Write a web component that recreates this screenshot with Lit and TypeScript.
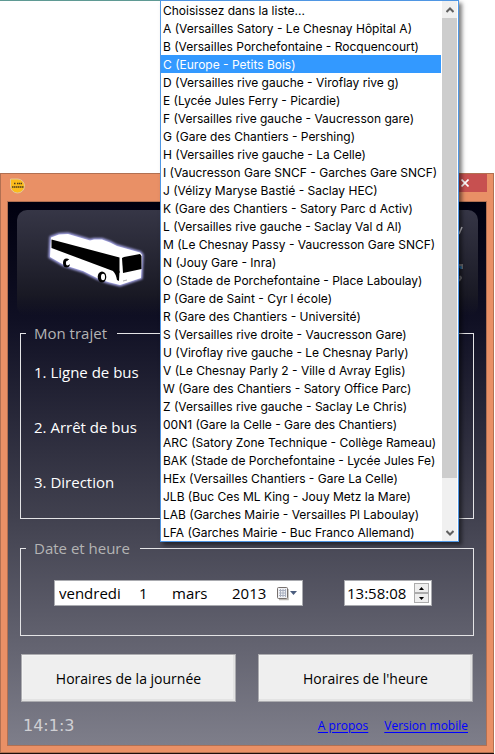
import { LitElement, html, css } from "lit";
import { customElement } from "lit/decorators.js";

const LINES = [
  "Choisissez dans la liste...",
  "A (Versailles Satory - Le Chesnay Hôpital A)",
  "B (Versailles Porchefontaine - Rocquencourt)",
  "C (Europe - Petits Bois)",
  "D (Versailles rive gauche - Viroflay rive g)",
  "E (Lycée Jules Ferry - Picardie)",
  "F (Versailles rive gauche - Vaucresson gare)",
  "G (Gare des Chantiers - Pershing)",
  "H (Versailles rive gauche - La Celle)",
  "I (Vaucresson Gare SNCF - Garches Gare SNCF)",
  "J (Vélizy Maryse Bastié - Saclay HEC)",
  "K (Gare des Chantiers - Satory Parc d Activ)",
  "L (Versailles rive gauche - Saclay Val d Al)",
  "M (Le Chesnay Passy - Vaucresson Gare SNCF)",
  "N (Jouy Gare - Inra)",
  "O (Stade de Porchefontaine - Place Laboulay)",
  "P (Gare de Saint - Cyr l école)",
  "R (Gare des Chantiers - Université)",
  "S (Versailles rive droite - Vaucresson Gare)",
  "U (Viroflay rive gauche - Le Chesnay Parly)",
  "V (Le Chesnay Parly 2 - Ville d Avray Eglis)",
  "W (Gare des Chantiers - Satory Office Parc)",
  "Z (Versailles rive gauche - Saclay Le Chris)",
  "00N1 (Gare la Celle - Gare des Chantiers)",
  "ARC (Satory Zone Technique - Collège Rameau)",
  "BAK (Stade de Porchefontaine - Lycée Jules Fe)",
  "HEx (Versailles Chantiers - Gare La Celle)",
  "JLB (Buc Ces ML King - Jouy Metz la Mare)",
  "LAB (Garches Mairie - Versailles Pl Laboulay)",
  "LFA (Garches Mairie - Buc Franco Allemand)",
];

@customElement("app-root")
export class AppRoot extends LitElement {
  static styles = css`
    :host {
      display: block;
      position: relative;
      box-sizing: border-box;
      min-height: 100vh;
      padding: 173px 1px 1px 0;
      background: linear-gradient(#5f9a94, #5f9a94) 0 0 / 160px 1px no-repeat #fff;
      font-family: "Trebuchet MS", "Open Sans", "Noto Sans", sans-serif;
      font-size: 15px;
      color: #fff;
      overflow: hidden;
    }
    * { box-sizing: border-box; }
    button, input, select { font: inherit; margin: 0; }
    .window {
      border: 1px solid #b17052;
      background: #e99066;
      padding: 0 6px 6px;
      box-shadow: 0 2px 0 #1c0e0a;
    }
    .titlebar {
      display: flex;
      justify-content: space-between;
      align-items: flex-start;
      height: 27px;
    }
    .logo { width: 18px; height: 18px; margin: 3px 0 0 2px; }
    .close {
      width: 45px;
      height: 18px;
      padding: 0;
      border: 0;
      background: #c75050;
      display: flex;
      align-items: center;
      justify-content: center;
    }
    .client {
      display: flex;
      flex-direction: column;
      padding: 8px 8px 7px 9px;
      border: 1px solid #b17052;
      background: linear-gradient(#00000f, #101024 22%, #41414f 58%, #7e7e8a);
    }
    .banner {
      display: flex;
      justify-content: space-between;
      height: 106px;
      border-radius: 10px;
      background: linear-gradient(#363646, #191924 80%, rgba(20, 20, 34, 0));
    }
    .bus { width: 112px; height: 70px; margin: 15px 0 0 23px; }
    .title { width: 30px; height: 80px; }
    fieldset {
      margin: 0 4px 0 3px;
      padding: 0 13px;
      border: 1px solid #e4e4e6;
      min-width: 0;
    }
    legend {
      margin-left: -8px;
      padding: 0 10px 0 8px;
      line-height: 20px;
      color: #b4b4b4;
    }
    .trip { margin-top: 7px; height: 196px; }
    .trip label { display: block; line-height: 20px; margin: 19px 0 35px; }
    .trip label + label { margin-top: 0; }
    .when { margin-top: 19px; height: 98px; }
    .fields {
      display: flex;
      justify-content: space-between;
      padding: 22px 28px 0 20px;
    }
    .field {
      display: flex;
      align-items: center;
      height: 26px;
      border: 1px solid #aaabb0;
      background: #fff;
      color: #000;
    }
    .date { width: 249px; padding: 0 4px; }
    .date input, .time input {
      flex: 1;
      min-width: 0;
      width: 0;
      height: 22px;
      border: 0;
      padding: 0;
      background: none;
      color: #000;
      outline: none;
    }
    .date .day { flex: 0 0 80px; }
    .date .num { flex: 0 0 33px; }
    .date .month { flex: 0 0 60px; }
    .pick { border: 0; background: none; padding: 0; width: 22px; height: 16px; display: flex; }
    .time { width: 88px; padding: 0 2px; }
    .spin { display: flex; flex-direction: column; width: 15px; }
    .spin button {
      height: 10px;
      padding: 0;
      border: 1px solid #acacac;
      background: #eee;
      display: flex;
      align-items: center;
      justify-content: center;
    }
    .actions {
      display: grid;
      grid-template-columns: 1fr 1fr;
      gap: 22px;
      margin: 18px 5px 0 4px;
    }
    .actions button {
      height: 48px;
      border: 1px solid #acacb0;
      background: #efefef;
      box-shadow: inset -2px -2px 0 #e3e3e3, inset 1px 1px 0 #f4f4f4;
      color: #000;
      font-size: 14px;
    }
    .footer {
      display: flex;
      align-items: center;
      gap: 16px;
      margin: 10px 10px 0 6px;
      height: 26px;
      font-size: 12px;
    }
    .clock {
      margin-right: auto;
      font: 16px "DejaVu Sans", sans-serif;
      color: #d0d0d4;
    }
    a { color: #00f; text-underline-offset: 2px; }
    .popup {
      position: absolute;
      top: 0;
      left: 160px;
      width: 299px;
      display: flex;
      background: #fff;
      border: 1px solid #4f96e3;
      box-shadow: 3px 3px 4px rgba(0, 0, 0, 0.5);
    }
    .popup select {
      flex: 1;
      min-width: 0;
      height: 540px;
      border: 0;
      padding: 0;
      outline: none;
      overflow: hidden;
      background: #fff;
      color: #000;
      font-family: "Trebuchet MS", Inter, "Open Sans", sans-serif;
      font-size: 12px;
      border-radius: 0;
      scrollbar-width: none;
    }
    option {
      height: 18px;
      min-height: 18px;
      padding: 2px 2px 0;
      line-height: 16px;
      color: #000;
    }
    option:checked {
      background: #39f linear-gradient(#39f, #39f);
      color: #fff;
      -webkit-text-fill-color: #fff;
    }
    .scroll {
      width: 17px;
      display: flex;
      flex-direction: column;
      border-left: 1px solid #fff;
      border-right: 1px solid #fff;
      background: #f0f0f0;
    }
    .scroll button {
      height: 17px;
      padding: 0;
      border: 0;
      background: #f0f0f0;
      display: flex;
      align-items: center;
      justify-content: center;
    }
    .thumb { height: 460px; background: #cdcdcd; margin-bottom: auto; }
  `;

  render() {
    return html`
      <main class="window">
        <header class="titlebar">
          <svg class="logo" viewBox="0 0 18 18" aria-hidden="true">
            <path d="M1.500 2H9a7 7 0 1 1-7.500 7Z" fill="#fbbc1c" stroke="#e3c79a" />
            <path d="M5 6.500h2M8 6.500h5M3 10h12" stroke="#4a3a1c" stroke-width="1.500" stroke-dasharray="1.500 .5" />
          </svg>
          <button class="close" aria-label="Fermer">
            <svg width="8" height="8" viewBox="0 0 8 8"><path d="M.5.5 7.500 7.500M7.500.5.5 7.500" stroke="#fff" stroke-width="1.600" /></svg>
          </button>
        </header>
        <div class="client">
          <div class="banner">
            <svg class="bus" viewBox="0 0 112 70" aria-hidden="true">
              <defs>
                <filter id="glow" x="-20%" y="-20%" width="140%" height="140%"><feGaussianBlur stdDeviation="1.300" /></filter>
                <path id="body" d="M11 12.500 19 9.500 28 9 50 15.500 54 14.500H62L70 17.500 77 21 100 27.500 102 30 101 53 80 60 68 57 57 53 43 46 24 40 10 32Z" />
              </defs>
              <use href="#body" fill="#a9a9ec" stroke="#a9a9ec" stroke-width="3" filter="url(#glow)" />
              <use href="#body" fill="#fff" />
              <path d="M11.500 14.500 79.500 32.500V48L73 46 11.500 23Z" />
              <path d="M82 33 84 32 100 29 101.500 31V44L83 48Z" />
              <ellipse cx="26.500" cy="38" rx="3.500" ry="4.500" /><ellipse cx="27.500" cy="38" rx="1.600" ry="2.600" fill="#fff" /><path d="M28 35h3v4l-3 1Z" fill="#fff" />
              <ellipse cx="62" cy="52" rx="4.300" ry="5.500" /><ellipse cx="63" cy="52" rx="2" ry="3.300" fill="#fff" />
              <path d="M73 44 79.500 46 79 56 77 55Q76 49 73 46Z" />
              <path d="M83 56 87 55" stroke="#aaa" />
            </svg>
            <svg class="title" viewBox="0 0 30 80" aria-hidden="true">
              <path d="M14 17 11 24" stroke="#d0d0d8" stroke-width="1.500" />
              <path d="M11 55h3v4M11 71l2-3-1-2" stroke="#6d6d72" stroke-width="2" fill="none" />
              <path d="M11 57h2v2" stroke="#1e6ba5" stroke-width="1.500" fill="none" />
            </svg>
          </div>
          <fieldset class="trip">
            <legend>Mon trajet</legend>
            <label for="line">1. Ligne de bus</label>
            <label>2. Arrêt de bus</label>
            <label>3. Direction</label>
          </fieldset>
          <fieldset class="when">
            <legend>Date et heure</legend>
            <div class="fields">
              <div class="field date">
                <input class="day" aria-label="Jour" value="vendredi" />
                <input class="num" aria-label="Quantième" value="1" />
                <input class="month" aria-label="Mois" value="mars" />
                <input aria-label="Année" value="2013" />
                <button class="pick" aria-label="Calendrier">
                  <svg width="22" height="16" viewBox="0 0 22 16">
                    <path d="M3 14.500h9V4" fill="none" stroke="#bdb9b5" stroke-width="1.500" />
                    <rect x="1.500" y="2.500" width="10" height="11" rx="1" fill="#f1f2f5" stroke="#77706d" />
                    <path d="M3 5.500h7M3 8h7M3 10.500h7M4.500 4v8M7 4v8M9.500 4v8" stroke="#aab0c0" />
                    <path d="M14 6h7l-3.500 4Z" fill="#4b5d7e" />
                  </svg>
                </button>
              </div>
              <div class="field time">
                <input aria-label="Heure" value="13:58:08" />
                <div class="spin">
                  <button aria-label="Plus"><svg width="5" height="3" viewBox="0 0 5 3"><path d="M0 3 2.500 0 5 3Z" /></svg></button>
                  <button aria-label="Moins"><svg width="5" height="3" viewBox="0 0 5 3"><path d="M0 0h5L2.500 3Z" /></svg></button>
                </div>
              </div>
            </div>
          </fieldset>
          <div class="actions">
            <button>Horaires de la journée</button>
            <button>Horaires de l'heure</button>
          </div>
          <footer class="footer">
            <span class="clock">14:1:3</span>
            <a href="#apropos">A propos</a>
            <a href="#mobile">Version mobile</a>
          </footer>
        </div>
      </main>
      <div class="popup">
        <select id="line" size="30" aria-label="Ligne de bus">
          ${LINES.map((t, i) => html`<option ?selected=${i === 3}>${t}</option>`)}
        </select>
        <div class="scroll">
          <button aria-label="Monter"><svg width="8" height="6" viewBox="0 0 8 6"><path d="M.5 5 4 1.500 7.500 5" fill="none" stroke="#606060" stroke-width="2" /></svg></button>
          <div class="thumb"></div>
          <button aria-label="Descendre"><svg width="8" height="6" viewBox="0 0 8 6"><path d="M.5 1 4 4.500 7.500 1" fill="none" stroke="#606060" stroke-width="2" /></svg></button>
        </div>
      </div>
    `;
  }
}
